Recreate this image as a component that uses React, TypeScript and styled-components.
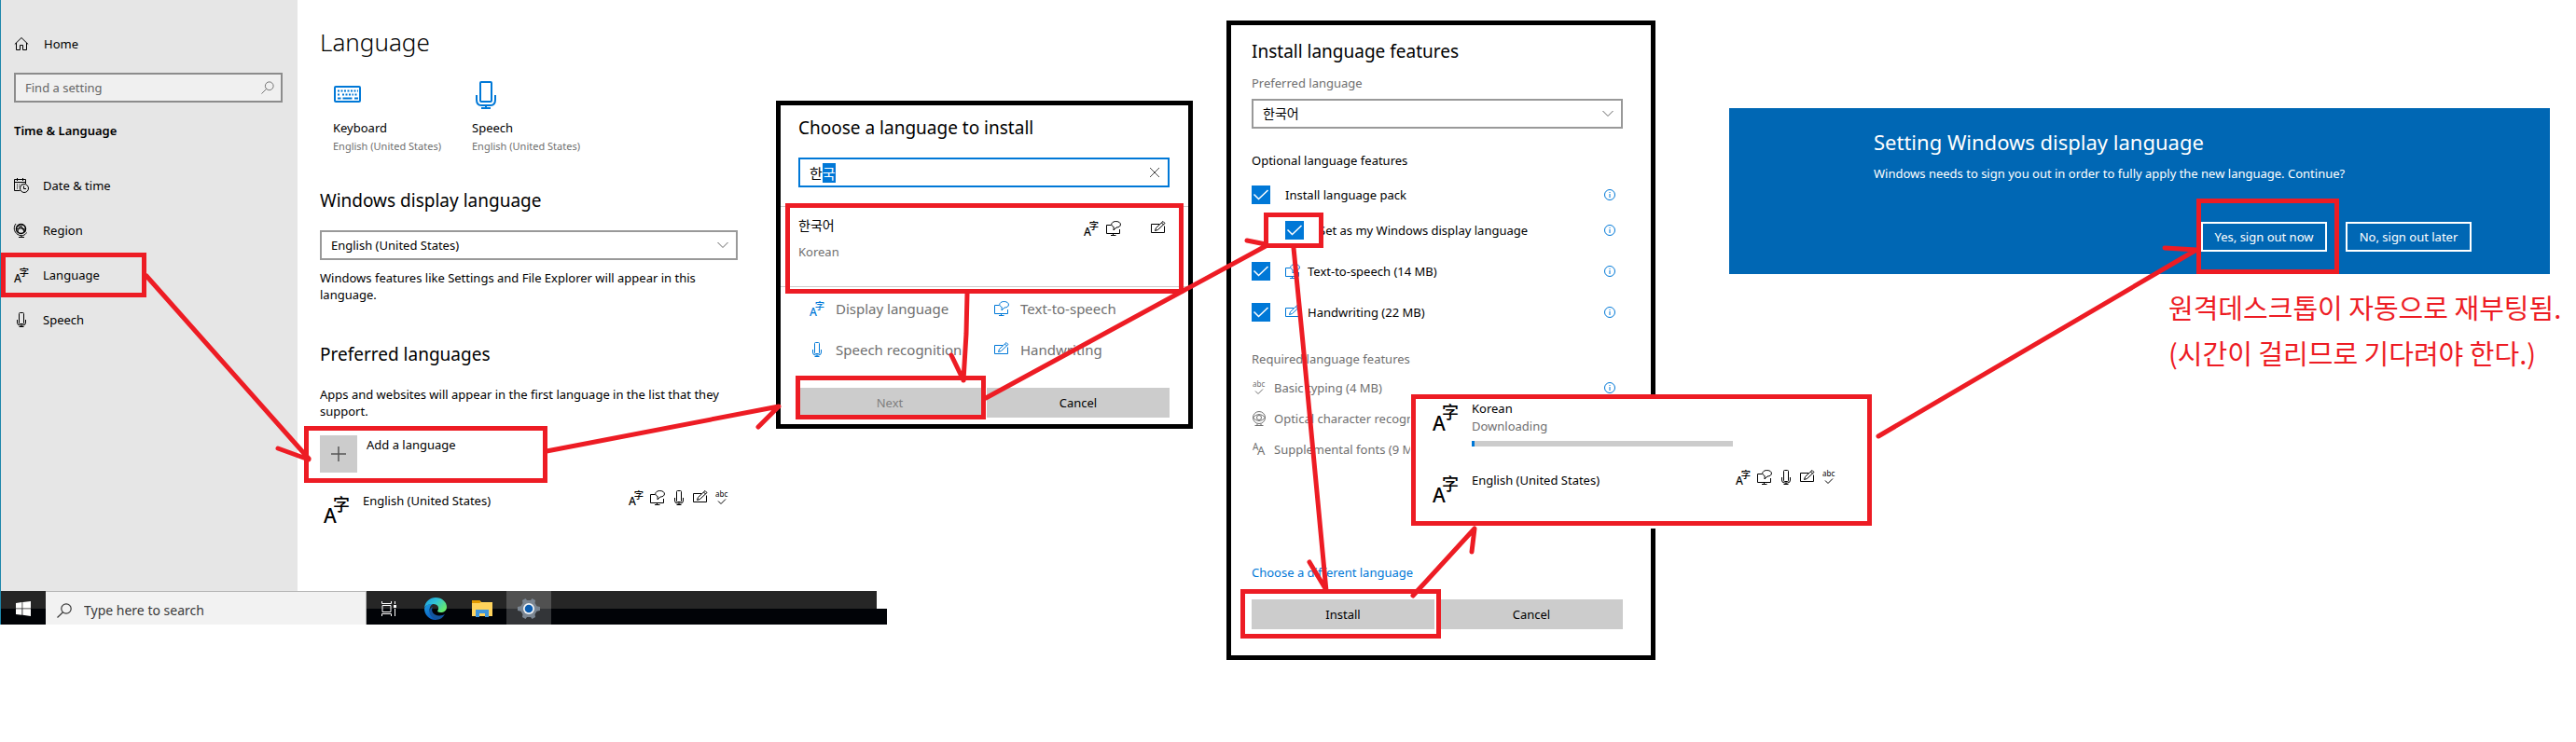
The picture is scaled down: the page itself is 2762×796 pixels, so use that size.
import React, { useEffect, useRef } from "react";
import styled, { createGlobalStyle, css } from "styled-components";

const RED = "#ed1c24";
const BLUE = "#0078d7";
const MUTED = "#6f6f6f";

const GlobalStyle = createGlobalStyle`
  *, *::before, *::after { box-sizing: border-box; }
  body {
    margin: 0;
    background: #fff;
    color: #000;
    font: 400 13px/18px "Noto Sans", "Noto Sans CJK KR", sans-serif;
  }
  h1, h2, h3, p, ul { margin: 0; padding: 0; font-weight: 400; }
  ul { list-style: none; }
  button, input, select { font: inherit; color: inherit; border-radius: 0; margin: 0; }
  svg { display: block; flex: none; }
`;

/* ---------- page ---------- */

const Board = styled.main`
  position: relative;
  display: grid;
  grid-template-columns: minmax(0, 1315fr) minmax(0, 539fr) minmax(0, 880fr);
  align-items: start;
  padding-right: 28px;
  min-height: 100vh;
`;

const Arrows = styled.svg`
  position: absolute;
  top: 0;
  left: 0;
  width: 100%;
  height: 796px;
  pointer-events: none;
  fill: none;
  stroke: ${RED};
  stroke-width: 5;
  stroke-linecap: round;
  stroke-linejoin: round;
`;

/* Red outline drawn around the control that holds it */
const Mark = styled.span<{ $inset: string }>`
  position: absolute;
  inset: ${(p) => p.$inset};
  border: 5px solid ${RED};
  pointer-events: none;
  z-index: 1;
`;

/* ---------- shared parts ---------- */

const SectionTitle = styled.h2`
  display: block;
  font-size: 19px;
  line-height: 28px;
`;

const SelectBox = styled.div`
  display: grid;
  align-items: center;
  > * { grid-area: 1 / 1; }
  > svg { justify-self: end; margin-right: 10px; pointer-events: none; color: #666; }
`;

const Select = styled.select`
  appearance: none;
  width: 100%;
  height: 32px;
  padding: 0 10px;
  border: 2px solid #999;
  background: #fff;
`;

const KoreanSelect = styled(Select)`
  font-size: 14px;
`;

const ButtonRow = styled.div`
  display: grid;
  grid-template-columns: 1fr 1fr;
  gap: 6px;
`;

const PushButton = styled.button`
  position: relative;
  height: 32px;
  padding: 0;
  border: 0;
  background: #ccc;
  &:disabled { color: #7f7f7f; }
`;

const Glyph = styled.svg`
  width: 16px;
  height: 16px;
  overflow: visible;
  fill: none;
  stroke: currentColor;
  stroke-width: 1;
  text {
    fill: currentColor;
    stroke: none;
    font-family: "Noto Sans", sans-serif;
  }
  .han { font-family: "Noto Sans CJK SC", sans-serif; font-weight: 500; }
`;

const LanguageIcon = ({ size = 16 }: { size?: number }) => (
  <Glyph viewBox="0 0 28 28" style={{ width: size, height: size }} aria-hidden="true">
    <text x="0" y="28" fontSize="21" fontWeight="500">A</text>
    <text className="han" x="10" y="15" fontSize="18">字</text>
  </Glyph>
);

const SpeakIcon = () => (
  <Glyph viewBox="0 0 16 16" aria-hidden="true">
    <path d="M5.500 4.500h-5v9h14V9M5 15.500h5.500M7.500 13.500v2" />
    <path d="M8.200 6.500C4 5 5.500.500 10.500.500c6.500 0 6.500 6.500.500 6.500L8 10z" />
  </Glyph>
);

const MicIcon = () => (
  <Glyph viewBox="0 0 16 16" aria-hidden="true">
    <path d="M5.500 1.500a1 1 0 0 1 1-1h3a1 1 0 0 1 1 1v10a1 1 0 0 1-1 1h-3a1 1 0 0 1-1-1z" />
    <path d="M3.500 8v3a3 3 0 0 0 3 3h3a3 3 0 0 0 3-3V8M8 14v1.500M5.500 15.500h5" />
  </Glyph>
);

const PenIcon = () => (
  <Glyph viewBox="0 0 16 16" aria-hidden="true">
    <path d="M9 3.500H.5v9h14v-7" />
    <path d="M4.500 10.500l1-3 7.500-7 2 2-7.500 7zM11.500 2l2 2" />
  </Glyph>
);

const TypingIcon = () => (
  <Glyph viewBox="0 0 16 16" aria-hidden="true">
    <text x="1" y="7" fontSize="8">abc</text>
    <path d="M4 11.500l3 3 5-5" />
  </Glyph>
);

const CameraIcon = () => (
  <Glyph viewBox="0 0 16 16" aria-hidden="true">
    <circle cx="8" cy="7" r="6.500" />
    <circle cx="8" cy="7" r="2.500" />
    <path d="M1.500 7c4-4.500 9-4.500 13 0-4 4.500-9 4.500-13 0M3.500 15.500h9M6 13.500v2M10 13.500v2" />
  </Glyph>
);

const FontsIcon = () => (
  <Glyph viewBox="0 0 16 16" aria-hidden="true">
    <text x="1" y="9" fontSize="10">A</text>
    <text x="6" y="14" fontSize="13">A</text>
  </Glyph>
);

const Chevron = () => (
  <Glyph viewBox="0 0 12 16" style={{ width: 12 }} aria-hidden="true">
    <path d="M.500 5l5.500 5.500L11.500 5" />
  </Glyph>
);

const InfoGlyph = styled(Glyph)`
  width: 14px;
  height: 14px;
  color: ${BLUE};
`;

const InfoIcon = () => (
  <InfoGlyph viewBox="0 0 14 14" aria-hidden="true">
    <circle cx="7" cy="7" r="5.500" />
    <path d="M7 6v4M7 4v1" />
  </InfoGlyph>
);

/* ---------- settings window ---------- */

const Desktop = styled.div`
  display: flex;
  flex-direction: column;
  margin-right: 36px;
  border-left: 1px solid #1e87ab;
`;

const WindowRow = styled.div`
  display: flex;
  align-items: stretch;
`;

const Sidebar = styled.nav`
  flex: 0 0 318px;
  padding: 23px 16px 0 0;
  background: #e6e6e6;
`;

const NavItem = styled.a<{ $gap?: number }>`
  position: relative;
  display: flex;
  align-items: center;
  gap: ${(p) => p.$gap ?? 15}px;
  width: 156px;
  height: 48px;
  padding-left: 14px;
  color: inherit;
  text-decoration: none;
`;

const FindBox = styled.label`
  display: flex;
  align-items: center;
  height: 32px;
  margin: 7px 0 0 14px;
  padding: 0 7px 0 10px;
  border: 2px solid #8c8c8c;
  background: #f0f0f0;
  color: #666;
`;

const PlainInput = styled.input`
  flex: 1;
  min-width: 0;
  height: 100%;
  padding: 0;
  border: 0;
  outline: 0;
  background: none;
  &::placeholder { color: inherit; opacity: 1; }
`;

const SidebarTitle = styled.h3`
  margin: 21px 0 26px 14px;
  font-size: 13px;
  line-height: 18px;
  font-weight: 600;
`;

const Content = styled.section`
  flex: 1;
  min-width: 0;
  padding: 27px 41px 73px 24px;
`;

const PageTitle = styled.h1`
  font-size: 26px;
  line-height: 36px;
  font-weight: 300;
`;

const Tiles = styled.div`
  display: flex;
  margin: 23px 0 35px 14px;
`;

const Tile = styled.a`
  width: 149px;
  color: inherit;
  text-decoration: none;
  svg { color: ${BLUE}; margin-bottom: 10px; }
`;

const TileSub = styled.div`
  margin-top: 2px;
  font-size: 11px;
  color: ${MUTED};
`;

const Note = styled.p<{ $top: number; $bottom: number }>`
  margin: ${(p) => p.$top}px 0 ${(p) => p.$bottom}px;
`;

const AddButton = styled.button`
  position: relative;
  display: flex;
  align-items: flex-start;
  gap: 10px;
  width: 234px;
  padding: 0;
  border: 0;
  background: none;
  text-align: left;
`;

const AddLabel = styled.span`
  padding-top: 1px;
`;

const PlusTile = styled.svg`
  width: 40px;
  height: 40px;
  background: #ccc;
  stroke: #555;
`;

const DisplaySelect = styled(SelectBox)`
  margin-top: 18px;
`;

const LanguageRow = styled.div`
  display: flex;
  align-items: flex-start;
  gap: 14px;
  padding-left: 4px;
  > svg { margin-top: 5px; }
`;

const InstalledRow = styled(LanguageRow)`
  margin-top: 21px;
`;

const RowText = styled.div`
  flex: 1;
  min-width: 0;
`;

const FeatureIcons = styled.div<{ $right: number }>`
  display: flex;
  gap: 7px;
  margin-top: -2px;
  padding-right: ${(p) => p.$right}px;
`;

const AllFeatures = ({ right }: { right: number }) => (
  <FeatureIcons $right={right}>
    <LanguageIcon />
    <SpeakIcon />
    <MicIcon />
    <PenIcon />
    <TypingIcon />
  </FeatureIcons>
);

/* ---------- taskbar ---------- */

const Taskbar = styled.div`
  display: flex;
  width: 950px;
  height: 36px;
  background:
    linear-gradient(#262626, #262626) 0 0 / 939px 19px no-repeat,
    linear-gradient(#010307, #010307) 0 19px / 100% 17px no-repeat;
`;

const TaskButton = styled.button<{ $active?: boolean }>`
  display: grid;
  place-items: center;
  width: 48px;
  height: 36px;
  padding: 2px 0 0;
  margin-right: 2px;
  border: 0;
  background: ${(p) => (p.$active ? "rgba(255,255,255,.2)" : "none")};
  &:first-child { margin-right: 0; }
`;

const TaskSearch = styled.label`
  display: flex;
  align-items: center;
  gap: 13px;
  width: 344px;
  padding: 4px 12px 0;
  border-top: 1px solid #b5b5b5;
  border-right: 1px solid #b5b5b5;
  background: #f2f2f2;
  color: #3a3a3a;
  font-size: 14px;
`;

/* ---------- dialogs ---------- */

const Dialog = styled.section<{ $top: number }>`
  position: relative;
  align-self: flex-start;
  margin-top: ${(p) => p.$top}px;
  border: 5px solid #000;
  background: #fff;
`;

const ChooseDialog = styled(Dialog)`
  flex: 0 0 447px;
  padding: 10px 0 7px;
`;

const Inset = styled.div`
  margin: 0 20px 0 19px;
`;

const LanguageSearch = styled.div`
  display: flex;
  align-items: center;
  height: 32px;
  margin-top: 18px;
  padding: 0 6px 0 10px;
  border: 2px solid ${BLUE};
  font-size: 15px;
  ::selection { background: ${BLUE}; color: #fff; }
`;

const ClearButton = styled.button`
  padding: 0 2px;
  border: 0;
  background: none;
  color: #444;
`;

const ResultItem = styled.div`
  position: relative;
  display: flex;
  justify-content: space-between;
  margin-top: 20px;
  padding: 11px 24px 28px 19px;
  border: solid #ccc;
  border-width: 1px 0;
`;

const NativeName = styled.div`
  font-size: 14px;
  margin-bottom: 10px;
`;

const Muted = styled.div`
  color: ${MUTED};
`;

const DownloadState = styled(Muted)`
  margin-top: 1px;
`;

const ResultIcons = styled.div`
  display: grid;
  grid-template-columns: repeat(4, 16px);
  gap: 8px;
  margin-top: 4px;
  svg:last-child { grid-column: 4; }
`;

const Legend = styled.ul`
  display: grid;
  grid-template-columns: 198px 1fr;
  gap: 24px 0;
  margin: 13px 0 31px 31px;
`;

const LegendItem = styled.li`
  display: flex;
  align-items: center;
  gap: 12px;
  font-size: 15px;
  line-height: 20px;
  color: ${MUTED};
  svg { color: ${BLUE}; }
`;

const InstallColumn = styled.div`
  position: relative;
  width: 460px;
`;

const InstallDialog = styled(Dialog)`
  padding: 14px 30px 28px 22px;
`;

const FieldLabel = styled.label`
  display: block;
  margin: 11px 0 8px;
  color: ${MUTED};
`;

const GroupTitle = styled.h3<{ $top: number; $bottom: number; $muted?: boolean }>`
  margin: ${(p) => p.$top}px 0 ${(p) => p.$bottom}px;
  font-size: 13px;
  line-height: 18px;
  color: ${(p) => (p.$muted ? MUTED : "inherit")};
`;

const FeatureList = styled.ul`
  display: flex;
  flex-direction: column;
  gap: 24px;
  ul { margin: 18px 0 0 36px; }
`;

const RequiredList = styled.ul`
  display: flex;
  flex-direction: column;
  gap: 15px;
  color: ${MUTED};
`;

const FeatureRow = styled.div<{ $gap: number }>`
  display: flex;
  align-items: center;
  gap: ${(p) => p.$gap}px;
  padding-right: 7px;
  white-space: nowrap;
  > ${InfoGlyph} { margin-left: auto; }
`;

const CheckLabel = styled.label`
  display: flex;
  align-items: center;
  gap: 16px;
`;

const Named = styled.span`
  display: flex;
  align-items: center;
  gap: 8px;
  svg { color: ${BLUE}; }
`;

const CheckSquare = styled.span`
  position: relative;
  display: grid;
  > input, > svg { grid-area: 1 / 1; }
  > svg { pointer-events: none; }
`;

const CheckInput = styled.input`
  appearance: none;
  width: 20px;
  height: 20px;
  border: 2px solid #333;
  &:checked { border: 0; background: ${BLUE}; }
`;

const Check = ({ children }: { children?: React.ReactNode }) => (
  <CheckSquare>
    <CheckInput type="checkbox" defaultChecked />
    <svg width="20" height="20" viewBox="0 0 20 20" fill="none" stroke="#fff" strokeWidth="1.500" aria-hidden="true">
      <path d="M2.500 9.500l5 5L17.500 5" />
    </svg>
    {children}
  </CheckSquare>
);

const OtherLink = styled.a`
  display: block;
  width: max-content;
  margin: 114px 0 20px;
  color: ${BLUE};
  text-decoration: none;
`;

const Progress = styled.section`
  position: absolute;
  top: 423px;
  left: 198px;
  width: 494px;
  padding: 1px 0 20px 14px;
  border: 5px solid ${RED};
  background: #fff;
  box-shadow: 0 2px 0 1px #fff;
  ${LanguageRow} + ${LanguageRow} { margin-top: 27px; }
`;

const barShape = css`
  border: 0;
  border-radius: 0;
  background: #ccc;
`;

const Bar = styled.progress`
  appearance: none;
  display: block;
  width: 280px;
  height: 6px;
  margin-top: 7px;
  ${barShape}
  &::-webkit-progress-bar { ${barShape} }
  &::-webkit-progress-value { background: ${BLUE}; }
`;

/* ---------- sign-out prompt ---------- */

const SignOutColumn = styled.div`
  margin-top: 116px;
`;

const Prompt = styled.section`
  padding: 20px 84px 24px 155px;
  background: #0067b4;
  color: #fff;
`;

const PromptTitle = styled.h2`
  font-size: 22px;
  line-height: 32px;
`;

const PromptText = styled.p`
  margin: 9px 0 43px;
`;

const PromptActions = styled.div`
  display: flex;
  justify-content: flex-end;
  gap: 20px;
`;

const PromptButton = styled.button`
  position: relative;
  height: 32px;
  min-width: 135px;
  padding: 0 11px;
  border: 2px solid #fff;
  background: none;
  white-space: nowrap;
`;

const Remark = styled.p`
  margin: 11px 0 0 471px;
  width: max-content;
  font-family: "Noto Sans CJK KR", sans-serif;
  font-size: 29px;
  line-height: 49px;
  color: ${RED};
`;

export default function App() {
  const search = useRef<HTMLInputElement>(null);
  useEffect(() => {
    search.current?.focus();
    search.current?.setSelectionRange(1, 2);
  }, []);

  return (
    <>
      <GlobalStyle />
      <Board>
        <Desktop>
          <WindowRow>
            <Sidebar>
              <NavItem href="#home" $gap={16}>
                <Glyph viewBox="0 0 16 16" aria-hidden="true">
                  <path d="M.8 8.500L8 1.500l7.200 7M2.500 7v7.500h4v-5h3v5h4V7" />
                </Glyph>
                Home
              </NavItem>
              <FindBox>
                <PlainInput placeholder="Find a setting" aria-label="Find a setting" />
                <Glyph viewBox="0 0 16 16" style={{ width: 14, height: 14 }} aria-hidden="true">
                  <circle cx="10" cy="6" r="5" />
                  <path d="M6.500 9.500L.500 15.500" />
                </Glyph>
              </FindBox>
              <SidebarTitle>Time &amp; Language</SidebarTitle>
              <NavItem href="#date">
                <Glyph viewBox="0 0 16 16" aria-hidden="true">
                  <path d="M6.500 13.500h-6v-12h12V6M.500 4.500h12M3.500 0v3M9.500 0v3" />
                  <path d="M3 7h1M5.500 7h1M8 7h1M3 9h1M5.500 9h1M3 11h1" />
                  <circle cx="11" cy="11" r="4.500" />
                  <path d="M10.500 8.500v3H13" />
                </Glyph>
                Date &amp; time
              </NavItem>
              <NavItem href="#region">
                <Glyph viewBox="0 0 16 16" aria-hidden="true">
                  <circle cx="7.500" cy="6.500" r="5" strokeWidth="1.500" />
                  <path d="M3 3.500c3 0 7 3 9 6M4 10c0-3 3-7 6-8M5 2c3 1 6 5 5.500 9M2.500 7c3-1.500 7-1.500 10 .500" />
                  <path d="M2 1C-1 5 0 10 4 12.500s8 1 9.500-2M8 13.500v2M5 15.500h6" />
                </Glyph>
                Region
              </NavItem>
              <NavItem href="#language">
                <LanguageIcon />
                Language
                <Mark $inset="0 0 0 0" />
              </NavItem>
              <NavItem href="#speech">
                <MicIcon />
                Speech
              </NavItem>
            </Sidebar>

            <Content>
              <PageTitle>Language</PageTitle>
              <Tiles>
                <Tile href="#keyboard">
                  <svg width="32" height="32" viewBox="0 0 32 32" fill="none" stroke="currentColor" strokeWidth="2" aria-hidden="true">
                    <rect x="2" y="7" width="27" height="16" rx="1" />
                    <path d="M5 11.500h22M5 15.500h3.500M10 15.500h12M23.500 15.500H27" strokeDasharray="2 1.500" />
                    <path d="M5 19.500h3.500M10.500 19.500h10M23 19.500h4" />
                  </svg>
                  Keyboard
                  <TileSub>English (United States)</TileSub>
                </Tile>
                <Tile href="#speech-language">
                  <svg width="32" height="32" viewBox="0 0 32 32" fill="none" stroke="currentColor" strokeWidth="2" aria-hidden="true">
                    <rect x="9" y="2" width="12" height="21" rx="1" />
                    <path d="M5 16v5c0 4 2 6 5 6h10c3 0 5-2 5-6v-5M15 27v3M10 30h10" />
                  </svg>
                  Speech
                  <TileSub>English (United States)</TileSub>
                </Tile>
              </Tiles>

              <SectionTitle as="label" htmlFor="display-language">
                Windows display language
              </SectionTitle>
              <DisplaySelect>
                <Select id="display-language" defaultValue="en">
                  <option value="en">English (United States)</option>
                </Select>
                <Chevron />
              </DisplaySelect>
              <Note $top={10} $bottom={41}>
                Windows features like Settings and File Explorer will appear in this language.
              </Note>

              <SectionTitle>Preferred languages</SectionTitle>
              <Note $top={20} $bottom={17}>
                Apps and websites will appear in the first language in the list that they support.
              </Note>
              <AddButton type="button">
                <PlusTile viewBox="0 0 40 40" strokeWidth="1.500" aria-hidden="true">
                  <path d="M20 12v16M12 20h16" />
                </PlusTile>
                <AddLabel>Add a language</AddLabel>
                <Mark $inset="-10px -10px -11px -17px" />
              </AddButton>
              <InstalledRow>
                <LanguageIcon size={28} />
                <RowText>English (United States)</RowText>
                <AllFeatures right={9} />
              </InstalledRow>
            </Content>

            <ChooseDialog $top={108}>
              <Inset>
                <SectionTitle>Choose a language to install</SectionTitle>
                <LanguageSearch>
                  <PlainInput ref={search} defaultValue="한국" aria-label="Search languages" />
                  <ClearButton type="button" aria-label="Clear">
                    <svg width="12" height="12" viewBox="0 0 12 12" stroke="currentColor" strokeWidth="1" aria-hidden="true">
                      <path d="M1 1l10 10M11 1L1 11" />
                    </svg>
                  </ClearButton>
                </LanguageSearch>
              </Inset>
              <ResultItem>
                <div>
                  <NativeName>한국어</NativeName>
                  <Muted>Korean</Muted>
                </div>
                <ResultIcons>
                  <LanguageIcon />
                  <SpeakIcon />
                  <PenIcon />
                </ResultIcons>
                <Mark $inset="-4px 5px -8px 5px" />
              </ResultItem>
              <Legend>
                <LegendItem><LanguageIcon />Display language</LegendItem>
                <LegendItem><SpeakIcon />Text-to-speech</LegendItem>
                <LegendItem><MicIcon />Speech recognition</LegendItem>
                <LegendItem><PenIcon />Handwriting</LegendItem>
              </Legend>
              <Inset>
                <ButtonRow>
                  <PushButton type="button" disabled>
                    Next
                    <Mark $inset="-13px -5px -2px -3px" />
                  </PushButton>
                  <PushButton type="button">Cancel</PushButton>
                </ButtonRow>
              </Inset>
            </ChooseDialog>
          </WindowRow>

          <Taskbar>
            <TaskButton type="button" aria-label="Start">
              <svg width="16" height="16" viewBox="0 0 16 16" fill="#fff" aria-hidden="true">
                <path d="M0 2l6.500-.9v6.400H0zM7.300 1L16 0v7.500H7.300zM0 8.300h6.500v6.500L0 14zM7.300 8.300H16V16l-8.700-1.200z" />
              </svg>
            </TaskButton>
            <TaskSearch>
              <Glyph viewBox="0 0 16 16" aria-hidden="true">
                <circle cx="10" cy="6" r="5.200" strokeWidth="1.200" />
                <path d="M6.500 9.700L.500 15.500" strokeWidth="1.200" />
              </Glyph>
              <PlainInput placeholder="Type here to search" aria-label="Type here to search" />
            </TaskSearch>
            <TaskButton type="button" aria-label="Task view">
              <svg width="16" height="16" viewBox="0 0 16 16" fill="none" stroke="#fff" aria-hidden="true">
                <path d="M.500 0v2.500h10V0M.500 16v-2.500h10V16M1 4.500h9v7H1zM14.500 0v3M14.500 8v8" />
                <path d="M13 4h3v3h-3z" fill="#fff" stroke="none" />
              </svg>
            </TaskButton>
            <TaskButton type="button" aria-label="Edge">
              <svg width="24" height="26" viewBox="0 0 24 26" aria-hidden="true">
                <defs>
                  <linearGradient id="edgeTop" x1="0" y1="0" x2="1" y2=".6">
                    <stop offset="0" stopColor="#1b9de2" />
                    <stop offset=".5" stopColor="#30c2d6" />
                    <stop offset="1" stopColor="#66eb6e" />
                  </linearGradient>
                  <linearGradient id="edgeLow" x1="0" y1="0" x2=".5" y2="1">
                    <stop offset="0" stopColor="#1b9de2" />
                    <stop offset="1" stopColor="#0b5cc0" />
                  </linearGradient>
                </defs>
                <path d="M0 12C1 5 6 1 12 1c7 0 12 5 12 10 0 4-3 6-6.500 6-3 0-4-1-3-2.500 1.500-2 .5-6.500-5-6.500C5 8 1.500 9.500 0 12z" fill="url(#edgeTop)" />
                <path d="M0 13C1 9 5 7.500 9 8c-3 1.500-4 5-3 9 1 3.500 4 6.500 8 7.700C6 26 0 20 0 13z" fill="url(#edgeLow)" />
                <path d="M9 11c-2.500 4 .5 9.500 7 9.500 2.500 0 4.500-.8 6-1.700-2 4-5 5.900-8 5.900-5.500-1-9-5-8.500-9.200C5.800 13.500 7 11.700 9 11z" fill="#14559f" />
              </svg>
            </TaskButton>
            <TaskButton type="button" aria-label="File Explorer">
              <svg width="22" height="20" viewBox="0 0 22 20" aria-hidden="true">
                <path d="M0 1h8l2 2h12v15H0z" fill="#ffd35c" />
                <path d="M0 1h8l2 2-2 1H0z" fill="#e39a00" />
                <path d="M4 19v-8h14v8h-4v-4H8v4z" fill="#3f96dc" />
              </svg>
            </TaskButton>
            <TaskButton type="button" $active aria-label="Settings">
              <svg width="24" height="24" viewBox="0 0 24 24" aria-hidden="true">
                <path
                  d="M8.500 1l1.500 2h4l1.500-2 3.500 2-.5 3 2 3.200 3.500.8v4l-3.500.8-2 3.200.5 3-3.500 2-1.500-2h-4l-1.500 2L5 21l.5-3-2-3.200L0 14v-4l3.500-.8 2-3.200L5 3z"
                  fill="#7b8692"
                />
                <circle cx="12" cy="12" r="6" fill="#f2f4f6" />
                <circle cx="12" cy="12" r="4.300" fill="#0a5cb0" />
              </svg>
            </TaskButton>
          </Taskbar>
        </Desktop>

        <InstallColumn>
          <InstallDialog $top={22}>
            <SectionTitle>Install language features</SectionTitle>
            <FieldLabel htmlFor="preferred">Preferred language</FieldLabel>
            <SelectBox>
              <KoreanSelect id="preferred" defaultValue="ko">
                <option value="ko">한국어</option>
              </KoreanSelect>
              <Chevron />
            </SelectBox>

            <GroupTitle $top={25} $bottom={18}>Optional language features</GroupTitle>
            <FeatureList>
              <li>
                <FeatureRow $gap={16}>
                  <CheckLabel><Check />Install language pack</CheckLabel>
                  <InfoIcon />
                </FeatureRow>
                <ul>
                  <li>
                    <FeatureRow $gap={16}>
                      <CheckLabel>
                        <Check><Mark $inset="-9px -21px -9px -23px" /></Check>
                        Set as my Windows display language
                      </CheckLabel>
                      <InfoIcon />
                    </FeatureRow>
                  </li>
                </ul>
              </li>
              <li>
                <FeatureRow $gap={16}>
                  <CheckLabel><Check /><Named><SpeakIcon />Text-to-speech (14 MB)</Named></CheckLabel>
                  <InfoIcon />
                </FeatureRow>
              </li>
              <li>
                <FeatureRow $gap={16}>
                  <CheckLabel><Check /><Named><PenIcon />Handwriting (22 MB)</Named></CheckLabel>
                  <InfoIcon />
                </FeatureRow>
              </li>
            </FeatureList>

            <GroupTitle $top={31} $bottom={13} $muted>Required language features</GroupTitle>
            <RequiredList>
              <li><FeatureRow $gap={8}><TypingIcon />Basic typing (4 MB)<InfoIcon /></FeatureRow></li>
              <li><FeatureRow $gap={8}><CameraIcon />Optical character recognition</FeatureRow></li>
              <li><FeatureRow $gap={8}><FontsIcon />Supplemental fonts (9 MB)</FeatureRow></li>
            </RequiredList>

            <OtherLink href="#choose">Choose a different language</OtherLink>
            <ButtonRow>
              <PushButton type="button">
                Install
                <Mark $inset="-11px -7px -10px -12px" />
              </PushButton>
              <PushButton type="button">Cancel</PushButton>
            </ButtonRow>
          </InstallDialog>

          <Progress>
            <LanguageRow>
              <LanguageIcon size={28} />
              <RowText>
                Korean
                <DownloadState>Downloading</DownloadState>
                <Bar max={100} value={1} aria-label="Download progress" />
              </RowText>
            </LanguageRow>
            <LanguageRow>
              <LanguageIcon size={28} />
              <RowText>English (United States)</RowText>
              <AllFeatures right={33} />
            </LanguageRow>
          </Progress>
        </InstallColumn>

        <SignOutColumn>
          <Prompt>
            <PromptTitle>Setting Windows display language</PromptTitle>
            <PromptText>
              Windows needs to sign you out in order to fully apply the new language. Continue?
            </PromptText>
            <PromptActions>
              <PromptButton type="button">
                Yes, sign out now
                <Mark $inset="-27px -15px -26px -7px" />
              </PromptButton>
              <PromptButton type="button">No, sign out later</PromptButton>
            </PromptActions>
          </Prompt>
          <Remark>
            원격데스크톱이 자동으로 재부팅됨.
            <br />
            (시간이 걸리므로 기다려야 한다.)
          </Remark>
        </SignOutColumn>

        <Arrows viewBox="0 0 2762 796" preserveAspectRatio="none" aria-hidden="true">
          <path d="M157 296L331 492M298 481L331 493" />
          <path d="M586 484L835 436L813 458" />
          <path d="M1037 315L1036 358L1033 408M1020 381L1033 408" />
          <path d="M1057 427L1357 264M1337 258L1357 262" />
          <path d="M1387 266L1397 368L1422 634M1404 603L1422 633" />
          <path d="M1515 639L1581 567L1578 592" />
          <path d="M2014 468L2355 268L2321 266" />
        </Arrows>
      </Board>
    </>
  );
}
